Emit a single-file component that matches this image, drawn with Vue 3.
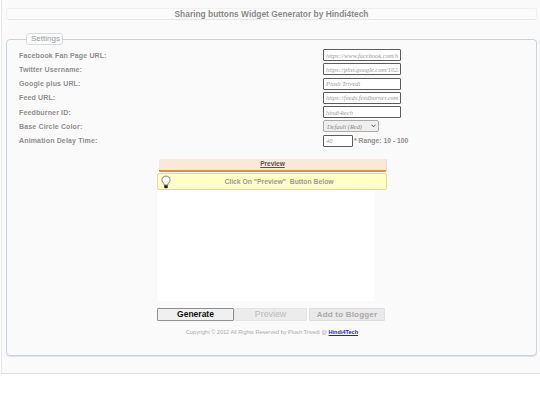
<template>
  <div class="page">
    <div class="title">Sharing buttons Widget Generator by Hindi4tech</div>

    <fieldset class="settings">
      <legend>Settings</legend>

      <div class="rows">
        <div class="row" v-for="f in fields" :key="f.label">
          <label>{{ f.label }}</label>
          <input class="text" type="text" :value="f.value" />
        </div>
        <div class="row">
          <label>Base Circle Color:</label>
          <div class="select-wrap">
            <select class="color">
              <option>Default (Red)</option>
            </select>
            <svg class="chevron" width="5" height="4" viewBox="0 0 5 4">
              <path d="M.6 .8l1.9 2 1.9-2" fill="none" stroke="#444" stroke-width="1"/>
            </svg>
          </div>
        </div>
        <div class="row">
          <label>Animation Delay Time:</label>
          <input class="text delay" type="text" value="40" />
          <span class="range">* Range: 10 - 100</span>
        </div>
      </div>

      <div class="preview-wrap">
        <div class="preview-head">Preview</div>
        <div class="notice">
          <svg class="bulb" width="10" height="14" viewBox="0 0 11 15">
            <path d="M5.5 1C3 1 1 2.8 1 5.1c0 1.8 1.3 2.7 2 4.1.3.6.4 1.1.4 1.6h4.2c0-.5.1-1 .4-1.6.7-1.4 2-2.3 2-4.1C10 2.8 8 1 5.5 1z" fill="#fffff6" stroke="#555" stroke-width=".8"/>
            <path d="M3.6 11h3.8v2.4l-1 1H4.6l-1-1z" fill="#222"/>
          </svg>
          <span>Click On "Preview"&nbsp; Button Below</span>
        </div>
        <div class="canvas"></div>
        <div class="actions">
          <button class="btn generate">Generate</button>
          <button class="btn preview">Preview</button>
          <button class="btn blogger">Add to Blogger</button>
        </div>
        <div class="copyright">
          Copyright © 2012 All Rights Reserved by Piush Trivedi @ <a href="#">Hindi4Tech</a>
        </div>
      </div>
    </fieldset>
  </div>
</template>

<script setup>
const fields = [
  { label: 'Facebook Fan Page URL:', value: 'https://www.facebook.com/hindi4tech' },
  { label: 'Twitter Username:', value: 'https://plus.google.com/102233445566' },
  { label: 'Google plus URL:', value: 'Piush Trivedi' },
  { label: 'Feed URL:', value: 'https://feeds.feedburner.com/hindi4tech' },
  { label: 'Feedburner ID:', value: 'hindi4tech' }
]
</script>

<style>
html, body {
  margin: 0;
  background: #fff;
}
</style>

<style scoped>
.page {
  box-sizing: border-box;
  width: 539px;
  height: 374px;
  margin-left: 1px;
  padding: 8px 3px 0 5px;
  background: #fafafa;
  border-left: 1px solid #e8e8e8;
  border-bottom: 1px solid #ddd;
  font-family: "Liberation Sans", Arial, sans-serif;
}

.title {
  box-sizing: border-box;
  margin-left: -1px;
  height: 12px;
  line-height: 11px;
  text-align: center;
  font-size: 8.4px;
  font-weight: bold;
  color: #8a8a8a;
  background: #fbfbfb;
  border: 1px solid #f0f0f0;
  border-bottom: 1px solid #e6e6e6;
  border-radius: 3px;
}

.settings {
  box-sizing: border-box;
  margin: 13px 0 0 -1px;
  padding: 0 12px;
  height: 323px;
  border: 1px solid #c9d2e2;
  border-radius: 4px;
  box-shadow: 0 1px 0 #dde2e8;
}

legend {
  box-sizing: border-box;
  margin-left: 7px;
  padding: 0 0 0 4px;
  width: 37px;
  height: 12px;
  line-height: 10px;
  font-size: 8px;
  text-align: left;
  color: #999;
  background: #fcfcfc;
  border: 1px solid #d3dae4;
  border-radius: 3px;
}

.rows {
  display: flex;
  flex-direction: column;
  gap: 2.3px;
  margin-top: 4px;
}

.row {
  display: flex;
  align-items: center;
  height: 12px;
}

label {
  width: 304px;
  flex: none;
  font-size: 7px;
  font-weight: bold;
  letter-spacing: 0.15px;
  color: #8e8e8e;
}

.text {
  box-sizing: border-box;
  width: 78px;
  height: 12px;
  padding: 0 2px;
  margin: 0;
  font-family: "Liberation Serif", "Times New Roman", serif;
  font-style: italic;
  font-size: 6.4px;
  color: #999;
  background: #fff;
  border: 1px solid #5c5c5c;
  border-radius: 1px;
  outline: none;
}

.delay {
  width: 30px;
}

.range {
  margin-left: 1px;
  font-size: 6.8px;
  font-weight: bold;
  color: #8e8e8e;
}

.select-wrap {
  position: relative;
  width: 56px;
  height: 12px;
}

.color {
  appearance: none;
  box-sizing: border-box;
  width: 100%;
  height: 12px;
  padding: 0 3px;
  margin: 0;
  display: block;
  font-family: "Liberation Serif", "Times New Roman", serif;
  font-style: italic;
  font-size: 6.4px;
  color: #888;
  background: #efefef;
  border: 1px solid #aaa;
  border-radius: 2px;
}

.chevron {
  position: absolute;
  right: 3px;
  top: 4px;
  pointer-events: none;
}

.preview-wrap {
  width: 230px;
  margin: 12px 0 0 138px;
}

.preview-head {
  box-sizing: border-box;
  width: 227px;
  margin-left: 2px;
  height: 13px;
  line-height: 10px;
  text-align: center;
  font-size: 6.5px;
  font-weight: bold;
  color: #555;
  background: #fbe9d7;
  border-bottom: 2px solid #e58c3c;
  border-radius: 1px;
  box-shadow: 1px 0 0 #ddd;
  text-decoration: underline;
}

.notice {
  box-sizing: border-box;
  position: relative;
  display: flex;
  align-items: center;
  justify-content: center;
  height: 17px;
  margin-top: 1px;
  padding-left: 14px;
  font-size: 6.8px;
  font-weight: bold;
  color: #999;
  background: #ffffc8;
  border: 1px solid #e4dc8e;
  border-radius: 2px;
}

.bulb {
  position: absolute;
  left: 3px;
  top: 1px;
}

.canvas {
  width: 217px;
  height: 111px;
  background: #fff;
}

.actions {
  display: flex;
  margin-top: 7px;
}

.btn {
  box-sizing: border-box;
  height: 13px;
  padding: 0;
  margin: 0;
  font-family: "Liberation Sans", Arial, sans-serif;
  font-size: 8.8px;
  line-height: 11px;
  border-radius: 1px;
}

.generate {
  width: 77px;
  color: #111;
  font-weight: bold;
  font-size: 8.5px;
  background: #f0f0f0;
  border: 1px solid #8f8f8f;
}

.preview {
  width: 73px;
  color: #bbb;
  background: #ececec;
  border: 1px solid #e4e4e4;
}

.blogger {
  width: 76px;
  margin-left: 2px;
  color: #aaa;
  font-weight: bold;
  font-size: 8px;
  letter-spacing: 0.2px;
  background: #e9e9e9;
  border: 1px solid #dedede;
}

.copyright {
  margin-top: 8px;
  text-align: center;
  font-size: 5.55px;
  line-height: 7px;
  color: #aaa;
}

.copyright a {
  color: #2222bb;
  font-weight: bold;
}
</style>
